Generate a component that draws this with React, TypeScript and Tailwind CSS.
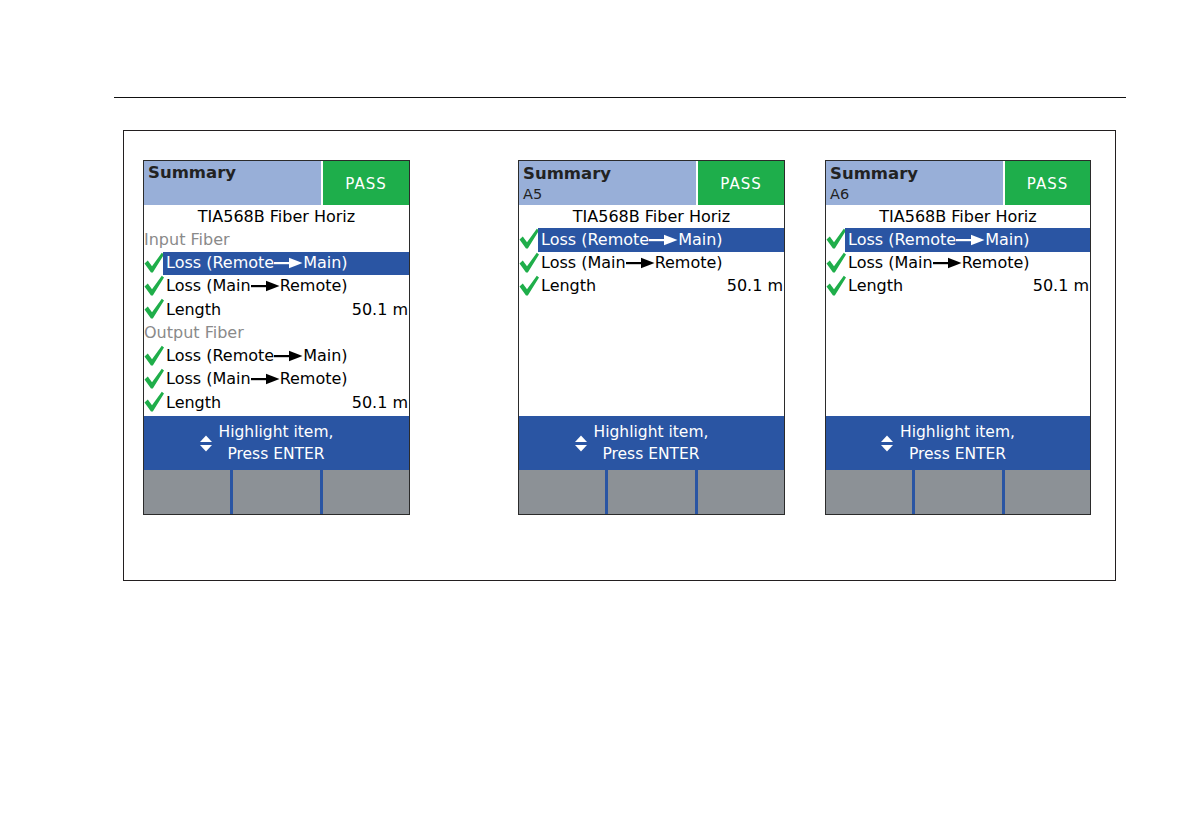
import React from "react";

const F = { fontFamily: '"DejaVu Sans", Verdana, sans-serif' };

function Check() {
  return (
    <svg width="20" height="21" viewBox="0 0 20 21" className="shrink-0 -mt-[2px]">
      <path d="M0.5 11.5 L3.8 8.6 L8 14.2 L17.8 0.8 L20 2.6 L8.8 20.5 L7 20.5 Z" fill="#1fae4a" />
    </svg>
  );
}

function Arrow() {
  return (
    <svg width="29" height="12" viewBox="0 0 29 12" className="inline-block">
      <rect x="0" y="5" width="18" height="2.2" fill="currentColor" />
      <path d="M15 0.8 L28.5 6 L15 11.2 Z" fill="currentColor" />
    </svg>
  );
}

function UpDown() {
  return (
    <svg width="12" height="17" viewBox="0 0 12 17" className="shrink-0">
      <path d="M6 0.5 L12 7 L0 7 Z" fill="white" />
      <path d="M0 10 L12 10 L6 16.5 Z" fill="white" />
    </svg>
  );
}

type Row =
  | { kind: "title" }
  | { kind: "group"; label: string }
  | { kind: "item"; a?: string; b?: string; label?: string; value?: string; hl?: boolean };

function RowView({ r }: { r: Row }) {
  if (r.kind === "title")
    return (
      <div className="h-[23.25px] flex items-center justify-center text-[16px] text-black">
        TIA568B Fiber Horiz
      </div>
    );
  if (r.kind === "group")
    return (
      <div className="h-[23.25px] flex items-center text-[16px] text-[#8a8a8a]">{r.label}</div>
    );
  return (
    <div className="h-[23.25px] flex items-center">
      <div className="w-[19px] flex items-center justify-start">
        <Check />
      </div>
      <div
        className={
          "flex-1 h-full flex items-center pl-[3px] pr-[1px] text-[16px] " +
          (r.hl ? "bg-[#2a55a3] text-white" : "text-black")
        }
      >
        {r.label ? (
          <>
            <span>{r.label}</span>
            <span className="ml-auto">{r.value}</span>
          </>
        ) : (
          <span className="flex items-center">
            Loss ({r.a}
            <Arrow />
            {r.b})
          </span>
        )}
      </div>
    </div>
  );
}

function Screen({ sub, rows, w }: { sub?: string; rows: Row[]; w: string }) {
  return (
    <div className={"h-[355px] border border-[#2b2b2b] bg-white flex flex-col " + w} style={F}>
      <div className="h-[44px] flex">
        <div className={"w-[177px] bg-[#98afd8] px-[4px] leading-[21px] " + (sub ? "pt-[2px]" : "pt-[1px]")}>
          <div className="text-[16.5px] font-bold text-[#222]">Summary</div>
          {sub && <div className="text-[14.5px] text-[#222]">{sub}</div>}
        </div>
        <div className="w-[2px] bg-white" />
        <div className="flex-1 bg-[#1eae4b] flex items-center justify-center pt-[3px] text-white text-[15px] tracking-[1px]">
          PASS
        </div>
      </div>
      <div className="flex flex-col">
        {rows.map((r, i) => (
          <RowView key={i} r={r} />
        ))}
      </div>
      <div className="mt-auto h-[54px] bg-[#2a55a3] flex items-center justify-center text-white text-[15.5px] leading-[22px]">
        <div className="flex items-center gap-[7px] pr-[20px]">
          <UpDown />
          <div className="text-center">
            <div>Highlight item,</div>
            <div>Press ENTER</div>
          </div>
        </div>
      </div>
      <div className="h-[44px] flex bg-[#2a55a3] gap-[3px]">
        <div className="w-[86px] bg-[#8c9196]" />
        <div className="w-[87px] bg-[#8c9196]" />
        <div className="flex-1 bg-[#8c9196]" />
      </div>
    </div>
  );
}

const short: Row[] = [
  { kind: "title" },
  { kind: "item", a: "Remote", b: "Main", hl: true },
  { kind: "item", a: "Main", b: "Remote" },
  { kind: "item", label: "Length", value: "50.1 m" },
];

const long: Row[] = [
  { kind: "title" },
  { kind: "group", label: "Input Fiber" },
  { kind: "item", a: "Remote", b: "Main", hl: true },
  { kind: "item", a: "Main", b: "Remote" },
  { kind: "item", label: "Length", value: "50.1 m" },
  { kind: "group", label: "Output Fiber" },
  { kind: "item", a: "Remote", b: "Main" },
  { kind: "item", a: "Main", b: "Remote" },
  { kind: "item", label: "Length", value: "50.1 m" },
];

export default function App() {
  return (
    <div className="w-[1188px] h-[828px] bg-white pt-[97px]">
      <div className="ml-[114px] w-[1012px] h-[1px] bg-[#111]" />
      <div className="ml-[123px] mt-[32px] w-[993px] h-[451px] border border-[#231f20] pl-[19px] pt-[29px] flex items-start">
        <Screen rows={long} w="w-[267px]" />
        <div className="ml-[108px]">
          <Screen sub="A5" rows={short} w="w-[267px]" />
        </div>
        <div className="ml-[40px]">
          <Screen sub="A6" rows={short} w="w-[266px]" />
        </div>
      </div>
    </div>
  );
}
